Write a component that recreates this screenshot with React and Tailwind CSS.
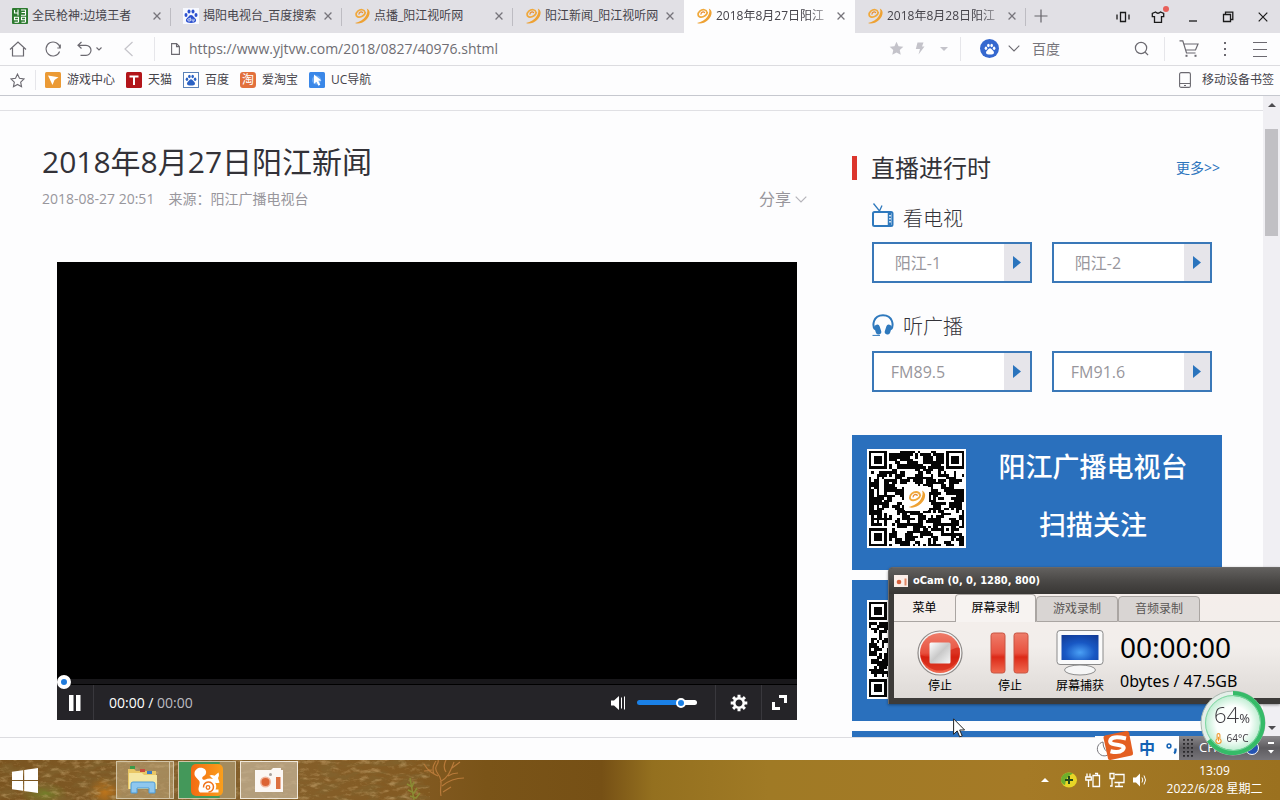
import React from "react";

const QR_SIZE = 37;

function buildQrPath(seed) {
  const finder = (x, y) => {
    const d = Math.max(Math.abs(x - 3), Math.abs(y - 3));
    return d === 3 || d <= 1;
  };
  let state = seed;
  const next = () => {
    state = (state * 1103515245 + 12345) % 2147483648;
    return state / 2147483648;
  };
  const grid = [];
  let path = "";
  for (let y = 0; y < QR_SIZE; y++) {
    grid.push([]);
    for (let x = 0; x < QR_SIZE; x++) {
      const pick = next();
      let on = next() > 0.45;
      if (pick < 0.22 && x > 0) on = grid[y][x - 1];
      else if (pick < 0.44 && y > 0) on = grid[y - 1][x];
      grid[y].push(on);
      if (x < 8 && y < 8) on = x < 7 && y < 7 && finder(x, y);
      else if (x > 28 && y < 8) on = x > 29 && y < 7 && finder(x - 30, y);
      else if (x < 8 && y > 28) on = x < 7 && y > 29 && finder(x, y - 30);
      else if (x >= 28 && x <= 32 && y >= 28 && y <= 32) {
        const d = Math.max(Math.abs(x - 30), Math.abs(y - 30));
        on = d !== 1;
      }
      if (on) path += `M${x} ${y}h1v1h-1z`;
    }
  }
  return path;
}

const QR_ONE = buildQrPath(4711);
const QR_TWO = buildQrPath(9203);

function SwirlShape() {
  return (
    <g>
      <path d="M12.800.4C17 2 16.300 8 12 12 8.500 15.300 4 16.400 1 15 5.500 14 9.800 11.600 11.800 8 13.400 5 13.800 2.500 12.800.4z" fill="#eea234" />
      <path d="M11 4.300C10.400 1.300 6.500.9 3.800 3.200 1.200 5.500 1.600 9 4.800 9.100 7.800 9.200 10.800 7 11.300 4.500" fill="none" stroke="#f0a93c" strokeWidth="1.700" strokeLinecap="round" />
      <path d="M8.600 4.600C7.500 3.200 4.900 4.300 5 6.100" fill="none" stroke="#e88f33" strokeWidth="1.200" strokeLinecap="round" />
    </g>
  );
}

function Swirl({ className = "h-4 w-4" }) {
  return (
    <svg viewBox="0 0 16 16" className={className} aria-hidden="true">
      <SwirlShape />
    </svg>
  );
}

function Qr({ path, className }) {
  return (
    <svg viewBox="-0.7 -0.7 38.400 38.400" className={className} shapeRendering="crispEdges" role="img" aria-label="二维码">
      <rect x="-0.7" y="-0.7" width="38.400" height="38.400" fill="#fff" />
      <path d={path} fill="#050505" />
      <rect x="13.500" y="13.500" width="10" height="10" rx="1.500" fill="#fff" />
      <g transform="translate(15 15.200) scale(.44)" shapeRendering="auto">
        <SwirlShape />
      </g>
    </svg>
  );
}

function Paw({ className, fill }) {
  return (
    <svg viewBox="0 0 16 16" className={className} fill={fill} aria-hidden="true">
      <ellipse cx="2.600" cy="7" rx="1.700" ry="2.200" />
      <ellipse cx="5.900" cy="3.300" rx="1.700" ry="2.300" />
      <ellipse cx="10.200" cy="3.300" rx="1.700" ry="2.300" />
      <ellipse cx="13.500" cy="7" rx="1.700" ry="2.200" />
      <path d="M8 7c1.500 0 2.300 1.400 3.500 2.700 1.500 1.500 2.200 2.500 1.600 4-.6 1.400-2.200 1.600-5.100 1.600s-4.500-.2-5.100-1.600c-.6-1.500.1-2.500 1.600-4C5.700 8.400 6.500 7 8 7z" />
    </svg>
  );
}

function BaiduIcon() {
  return (
    <svg viewBox="0 0 16 16" className="h-4 w-4" aria-hidden="true">
      <rect width="16" height="16" fill="#f7f9ff" />
      <g fill="#2b50cf">
        <ellipse cx="3" cy="7" rx="1.500" ry="2" />
        <ellipse cx="6" cy="3.500" rx="1.500" ry="2.100" />
        <ellipse cx="10" cy="3.500" rx="1.500" ry="2.100" />
        <ellipse cx="13" cy="7" rx="1.500" ry="2" />
        <path d="M8 7c1.500 0 2.200 1.400 3.400 2.600 1.400 1.400 2 2.300 1.500 3.700-.6 1.400-2 1.600-4.900 1.600s-4.300-.2-4.900-1.600c-.5-1.400.1-2.300 1.500-3.700C5.800 8.400 6.500 7 8 7z" />
      </g>
      <path d="M7.300 9.500v3.500h-1.500a1 1 0 010-2.200h1.500M9 10.800v1.500q0 .8 1 .8h1v-2.300" fill="none" stroke="#fff" strokeWidth=".8" />
    </svg>
  );
}

function GameIcon() {
  return (
    <svg viewBox="0 0 16 16" className="h-4 w-4" fill="none" aria-hidden="true">
      <rect width="16" height="16" rx="1" fill="#2c7a2f" />
      <g stroke="#fff" strokeWidth="1.100">
        <path d="M2.500 2v3h4M6 1.500v6M9 2h4.500v5.300H9M9.500 4.500h4" />
        <path d="M6.500 14.300H2.500M6.500 14.300V9.300h-4v2.500h4M13.500 14.300H9.500M13.500 14.300V9.300h-4v2.500h4" />
      </g>
    </svg>
  );
}

function CloseMark({ className = "h-2 w-2", width = 1.6 }) {
  return (
    <svg viewBox="0 0 10 10" className={className} stroke="currentColor" strokeWidth={width} aria-hidden="true">
      <path d="M.7.7l8.600 8.600M9.300.7L.7 9.300" />
    </svg>
  );
}

const TABS = [
  { title: "全民枪神:边境王者", icon: <GameIcon /> },
  { title: "揭阳电视台_百度搜索", icon: <BaiduIcon /> },
  { title: "点播_阳江视听网", icon: <Swirl /> },
  { title: "阳江新闻_阳江视听网", icon: <Swirl /> },
  { title: "2018年8月27日阳江", icon: <Swirl />, active: true },
  { title: "2018年8月28日阳江", icon: <Swirl /> },
];

function TabStrip() {
  return (
    <div className="flex h-[33px] shrink-0 bg-[#e1e0e5]">
      <div role="tablist" className="flex min-w-0">
        {TABS.map((tab, i) => (
          <div
            key={tab.title}
            className={
              "relative flex w-[171px] min-w-0 items-center pb-[2px] pl-3 pr-[10px] " + (tab.active ? "bg-[#fdfdfe]" : "")
            }
          >
            <button role="tab" aria-selected={!!tab.active} className="flex min-w-0 flex-1 items-center gap-1 text-left">
              <span className="shrink-0">{tab.icon}</span>
              <span
                className={
                  "whitespace-nowrap text-xs text-[#45434a] " +
                  (i < 4 ? "" : "[mask-image:linear-gradient(to_right,#000_92px,#0004_112px)]")
                }
              >
                {tab.title}
              </span>
            </button>
            <button aria-label="关闭标签页" className="flex w-2 shrink-0 justify-center text-[#77757c]">
              <CloseMark />
            </button>
            {i !== 3 && i !== 4 && <span className="absolute right-0 top-2 h-[18px] w-px bg-[#bdbcc2]" />}
          </div>
        ))}
      </div>
      <button aria-label="新建标签页" className="flex w-[30px] items-center justify-center pb-[2px] text-[#66646a]">
        <svg viewBox="0 0 14 14" className="h-[14px] w-[14px]" stroke="currentColor" strokeWidth="1.200"><path d="M7 .5v13M.5 7h13" /></svg>
      </button>
      <div className="ml-auto flex text-[#1a1a1a]">
        <button aria-label="分屏" className="flex w-[35px] items-center justify-center">
          <svg viewBox="0 0 14 12" className="h-3 w-[14px]" fill="none" stroke="currentColor" strokeWidth="1.300"><path d="M1 3.500v5M13 3.500v5M4.500 1.500h5v9h-5z" /></svg>
        </button>
        <button aria-label="皮肤" className="relative flex w-[35px] items-center justify-center">
          <svg viewBox="0 0 14 12" className="h-3 w-[14px]" fill="none" stroke="currentColor" strokeWidth="1.300"><path d="M4.500 1L1.300 2.500v3.200H3.500v5.600h7V5.700h2.200V2.500L9.500 1Q7 3.500 4.500 1z" /></svg>
          <span className="absolute right-[6px] top-[6px] h-[6px] w-[6px] rounded-full bg-[#e8605a]" />
        </button>
        <button aria-label="最小化" className="flex w-[35px] items-center justify-center">
          <svg viewBox="0 0 10 10" className="h-[10px] w-[10px]" stroke="currentColor" strokeWidth="1.300"><path d="M1 9h8" /></svg>
        </button>
        <button aria-label="还原" className="flex w-[35px] items-center justify-center">
          <svg viewBox="0 0 12 12" className="h-3 w-3" fill="none" stroke="currentColor" strokeWidth="1.300"><path d="M1.500 3.500h7v7h-7zM3.500 3V1.200h7.300v7.300H9" /></svg>
        </button>
        <button aria-label="关闭" className="flex w-[35px] items-center justify-center">
          <CloseMark className="h-[10px] w-[10px]" width={1.2} />
        </button>
      </div>
    </div>
  );
}

function Toolbar() {
  return (
    <div className="flex h-[33px] shrink-0 items-center border-b border-[#dcdce0] bg-[#fdfdfe] pb-px text-[#6b6970]">
      <button aria-label="主页" className="flex w-9 justify-center">
        <svg viewBox="0 0 18 16" className="h-4 w-[18px]" fill="none" stroke="currentColor" strokeWidth="1.200"><path d="M1 8.500L9 1l8 7.500M3.500 7v8h11V7" /></svg>
      </button>
      <button aria-label="刷新" className="flex w-[34px] justify-center">
        <svg viewBox="0 0 16 16" className="h-4 w-4" fill="none" stroke="currentColor" strokeWidth="1.100"><path d="M15 7A7 7 0 1 0 14.600 10.500M15.300 3.500V7h-3" /></svg>
      </button>
      <button aria-label="撤销" className="flex w-[38px] items-center justify-center gap-1">
        <svg viewBox="0 0 15 16" className="h-4 w-[15px]" fill="none" stroke="currentColor" strokeWidth="1.200"><path d="M4.500 1L1 4.300l3.500 3.200M1.200 4.300H9a5 5 0 010 10H3.500" /></svg>
        <svg viewBox="0 0 6 4" className="h-1 w-[6px]" fill="none" stroke="currentColor" strokeWidth="1.100"><path d="M.5.500L3 3 5.500.500" /></svg>
      </button>
      <button aria-label="后退" className="flex w-10 justify-center text-[#c5c4ca]">
        <svg viewBox="0 0 9 16" className="h-4 w-[9px]" fill="none" stroke="currentColor" strokeWidth="1.200"><path d="M8.500 1L1 8l7.500 7" /></svg>
      </button>
      <span className="ml-[6px] h-6 w-px bg-[#e6e6ea]" />
      <svg viewBox="0 0 9 12" className="ml-4 h-3 w-[9px]" fill="none" stroke="currentColor" strokeWidth="1.100" aria-hidden="true"><path d="M.6.600h5L8.400 3.500v7.900H.6zM5.500.600v3h3" /></svg>
      <input
        aria-label="地址"
        type="text"
        defaultValue="https://www.yjtvw.com/2018/0827/40976.shtml"
        className="ml-[9px] h-6 min-w-0 flex-1 bg-transparent text-sm text-[#6f6d73] outline-none"
      />
      <button aria-label="收藏" className="flex w-6 justify-center text-[#c4c3ca]">
        <svg viewBox="0 0 16 16" className="h-[15px] w-[15px]" fill="currentColor"><path d="M8 .8l2.200 4.700 5.100.6-3.800 3.500 1 5.100L8 12.200l-4.500 2.500 1-5.100L.7 6.100l5.100-.6z" /></svg>
      </button>
      <button aria-label="极速" className="flex w-6 justify-center text-[#c4c3ca]">
        <svg viewBox="0 0 10 13" className="h-[13px] w-[10px]" fill="currentColor"><path d="M2.500.500h6L7 4.500h2.500L3.500 12.500 5 7H.8z" /></svg>
      </button>
      <button aria-label="更多" className="flex w-6 justify-center text-[#c4c3ca]">
        <svg viewBox="0 0 8 4" className="h-1 w-2" fill="currentColor"><path d="M0 0h8L4 4z" /></svg>
      </button>
      <span className="ml-1 h-6 w-px bg-[#e6e6ea]" />
      <span className="ml-[19px] flex h-[19px] w-[19px] items-center justify-center rounded-full bg-[#3568cf]">
        <Paw className="h-3 w-3" fill="#fff" />
      </span>
      <button aria-label="选择搜索引擎" className="flex w-[30px] justify-center">
        <svg viewBox="0 0 12 7" className="h-[7px] w-3" fill="none" stroke="currentColor" strokeWidth="1.100"><path d="M.700.700L6 6 11.300.700" /></svg>
      </button>
      <input aria-label="搜索" type="text" placeholder="百度" className="ml-[3px] h-6 w-[97px] bg-transparent text-sm outline-none placeholder:text-[#77757b]" />
      <button aria-label="开始搜索" className="flex w-6 justify-center">
        <svg viewBox="0 0 16 16" className="h-[15px] w-[15px]" fill="none" stroke="currentColor" strokeWidth="1.300"><circle cx="7.500" cy="7.500" r="6" /><path d="M12 12l3 3" /></svg>
      </button>
      <span className="ml-[11px] h-6 w-px bg-[#e6e6ea]" />
      <button aria-label="购物" className="ml-3 flex w-6 justify-center">
        <svg viewBox="0 0 20 17" className="h-[17px] w-5" fill="none" stroke="currentColor" strokeWidth="1.200"><path d="M.500.800h3.300L7.500 13h9M4.800 4H19l-2.500 6H6.700" /><g fill="currentColor" stroke="none"><rect x="6.500" y="14.800" width="2" height="2" /><rect x="15.500" y="14.800" width="2" height="2" /></g></svg>
      </button>
      <button aria-label="扩展" className="ml-3 flex w-6 justify-center">
        <svg viewBox="0 0 2 14" className="h-[14px] w-[2px]" fill="currentColor"><path d="M0 0h2v2H0zM0 6h2v2H0zM0 12h2v2H0z" /></svg>
      </button>
      <button aria-label="菜单" className="ml-[11px] mr-2 flex w-6 justify-center">
        <svg viewBox="0 0 14 16" className="h-4 w-[14px]" fill="currentColor" shapeRendering="crispEdges"><path d="M0 1h14v1H0zM0 8h14v1H0zM0 15h14v1H0z" /></svg>
      </button>
    </div>
  );
}

const BOOKMARKS = [
  {
    label: "游戏中心",
    icon: <svg viewBox="0 0 16 16" className="h-4 w-4"><rect width="16" height="16" rx="1.500" fill="#eb9a35" /><path d="M3 3.500l10.500 1.800L9.500 8l-2 5z" fill="#fff" /></svg>,
  },
  {
    label: "天猫",
    icon: <svg viewBox="0 0 16 16" className="h-4 w-4"><rect width="16" height="16" rx="1.500" fill="#b3151a" /><path d="M3.500 4.500h9M8 4.500v8.500" stroke="#fff" strokeWidth="2" /></svg>,
  },
  {
    label: "百度",
    icon: <span className="block h-4 w-4 border border-[#5b82b8] bg-white p-px"><Paw className="h-3 w-3" fill="#2b62c4" /></span>,
  },
  {
    label: "爱淘宝",
    icon: <span className="flex h-4 w-4 items-center justify-center rounded-[3px] bg-[#e2703c] text-[12px] leading-4 text-white">淘</span>,
  },
  {
    label: "UC导航",
    icon: <svg viewBox="0 0 16 16" className="h-4 w-4"><rect width="16" height="16" rx="1.500" fill="#3a87e8" /><circle cx="7.500" cy="8" r="4.500" fill="#69a8f4" /><path d="M5 2.500l7.500 6-3.200.3 2 4-1.900.9-1.900-4L5 11.800z" fill="#fff" /></svg>,
  },
];

function BookmarkBar() {
  return (
    <div className="flex h-[30px] shrink-0 items-center border-b border-[#c6c8cf] bg-[#fdfdfe] pb-px text-xs leading-4 text-[#45434a]">
      <button aria-label="添加书签" className="flex w-[35px] justify-center text-[#6b6970]">
        <svg viewBox="0 0 16 16" className="h-[15px] w-[15px]" fill="none" stroke="currentColor" strokeWidth="1.200"><path d="M8 1.200l2.100 4.500 4.900.6-3.600 3.400.9 4.900L8 12.200l-4.300 2.400.9-4.900L1 6.300l4.900-.6z" /></svg>
      </button>
      <span className="h-5 w-px bg-[#e6e6ea]" />
      <nav className="ml-[9px] flex gap-[11px]">
        {BOOKMARKS.map((b) => (
          <a key={b.label} href="#" className="flex items-center gap-[6px]">
            {b.icon}
            {b.label}
          </a>
        ))}
      </nav>
      <a href="#" className="ml-auto mr-[6px] flex items-center gap-[11px]">
        <svg viewBox="0 0 12 16" className="h-4 w-3" fill="none" stroke="#6b6970" strokeWidth="1.100"><rect x=".6" y=".6" width="10.800" height="14.800" rx="1.500" /><path d="M.6 11.500h10.800M5 13.500h2" /></svg>
        移动设备书签
      </a>
    </div>
  );
}

function Player() {
  return (
    <section aria-label="视频播放器" className="ml-[15px] mr-[10px] mt-[51px] bg-[#252428]">
      <div className="h-[417px] bg-black" />
      <div className="flex h-[6px] items-center border-b border-black bg-[#18171a]">
        <input
          type="range"
          aria-label="播放进度"
          defaultValue="0"
          className="h-[14px] w-full shrink-0 appearance-none bg-transparent [&::-webkit-slider-thumb]:h-[14px] [&::-webkit-slider-thumb]:w-[14px] [&::-webkit-slider-thumb]:appearance-none [&::-webkit-slider-thumb]:rounded-full [&::-webkit-slider-thumb]:border-4 [&::-webkit-slider-thumb]:border-white [&::-webkit-slider-thumb]:bg-[#1f7bdc]"
        />
      </div>
      <div className="flex h-[35px] items-center text-white">
        <button aria-label="暂停" className="flex h-full w-[37px] items-center justify-center border-r border-[#39383d]">
          <svg viewBox="0 0 12 16" className="h-4 w-3" fill="#fff"><path d="M0 0h4.500v16H0zM7 0h4.500v16H7z" /></svg>
        </button>
        <div className="ml-[15px] text-sm">
          00:00 / <span className="text-[#bcbbc0]">00:00</span>
        </div>
        <button aria-label="静音" className="ml-auto">
          <svg viewBox="0 0 15 14" className="h-[14px] w-[15px]" fill="#fff"><path d="M0 4.500h3L8 0v14L3 9.500H0z" /><path d="M10.500 1.500v11M13.500 .5v13" stroke="#fff" strokeWidth="1" /></svg>
        </button>
        <input
          type="range"
          aria-label="音量"
          defaultValue="78"
          className="ml-[11px] h-[5px] w-[60px] appearance-none rounded-full bg-[linear-gradient(to_right,#1a80e6_73%,#fff_73%)] [&::-webkit-slider-thumb]:h-[10px] [&::-webkit-slider-thumb]:w-[10px] [&::-webkit-slider-thumb]:appearance-none [&::-webkit-slider-thumb]:rounded-full [&::-webkit-slider-thumb]:border-2 [&::-webkit-slider-thumb]:border-white [&::-webkit-slider-thumb]:bg-[#1a80e6]"
        />
        <button aria-label="设置" className="ml-[18px] flex h-full w-[46px] items-center justify-center border-l border-[#39383d]">
          <svg viewBox="-9 -9 18 18" className="h-[18px] w-[18px]" fill="none" stroke="#fff">
            <circle r="4.800" strokeWidth="2.600" />
            <g strokeWidth="3">
              <path d="M0-8.300v3M0 5.300v3M-8.300 0h3M5.300 0h3M-5.900-5.900l2.100 2.100M3.800 3.800l2.100 2.100M-5.900 5.900l2.100-2.100M3.800-3.800l2.100-2.100" />
            </g>
          </svg>
        </button>
        <button aria-label="全屏" className="flex h-full w-9 items-center justify-center border-l border-[#39383d]">
          <svg viewBox="0 0 15 15" className="h-[15px] w-[15px]" fill="none" stroke="#fff" strokeWidth="3"><path d="M7 1.500h6.500V8M8 13.500H1.500V7" /></svg>
        </button>
      </div>
    </section>
  );
}

function Channel({ label }) {
  return (
    <button className="flex h-[41px] w-40 border-2 border-[#3a78b8] bg-white text-base text-[#98969c]">
      <span className="flex-1 self-center pr-[42px] text-center">{label}</span>
      <span className="flex w-[26px] items-center justify-center self-stretch bg-[#e6e5ea]">
        <svg viewBox="0 0 8 13" className="h-[13px] w-2" fill="#2b74bd"><path d="M0 0l8 6.500L0 13z" /></svg>
      </span>
    </button>
  );
}

function Sidebar() {
  return (
    <aside className="w-[370px] shrink-0 pt-[41px] text-[#333238]">
      <div className="flex h-8 items-center">
        <span className="h-6 w-[5px] bg-[#dc352d]" />
        <h2 className="ml-[14px] text-2xl">直播进行时</h2>
        <a href="#" className="ml-auto mr-[2px] text-sm text-[#2b74bd]">更多&gt;&gt;</a>
      </div>
      <div className="flex h-[58px] items-center gap-[9px] pl-5 pt-3">
        <svg viewBox="0 0 22 24" className="-mt-2 h-6 w-[22px]" fill="none" stroke="#2f79bd" aria-hidden="true">
          <path d="M1.500.5l6 7.500L10 2.500" strokeWidth="1.300" />
          <rect x="1" y="9" width="19.500" height="14" rx="1.500" strokeWidth="2" />
          <path d="M17.500 9v14" strokeWidth="3.500" />
          <path d="M18 12v1.500M18 15v1.500M18 18v1.500" stroke="#fff" strokeWidth="1.500" />
        </svg>
        <h3 className="text-xl font-light">看电视</h3>
      </div>
      <div className="flex gap-5 pl-5">
        <Channel label="阳江-1" />
        <Channel label="阳江-2" />
      </div>
      <div className="flex h-[68px] items-center gap-[9px] pl-5 pt-5">
        <svg viewBox="0 0 22 22" className="-mt-1 h-[22px] w-[22px]" aria-hidden="true">
          <path d="M3 15.500C.2 12 .7 1.200 11 1.200S21.800 12 19 15.500" fill="none" stroke="#2f79bd" strokeWidth="2" />
          <rect x="3" y="10.500" width="5.500" height="10" rx="2.500" transform="rotate(-18 6 15.500)" fill="#2f79bd" />
          <rect x="13.500" y="10.500" width="5.500" height="10" rx="2.500" transform="rotate(18 16 15.500)" fill="#2f79bd" />
          <path d="M.5 21.400h7.500" stroke="#2f79bd" strokeWidth="1" />
        </svg>
        <h3 className="text-xl font-light">听广播</h3>
      </div>
      <div className="flex gap-5 pl-5">
        <Channel label="FM89.5" />
        <Channel label="FM91.6" />
      </div>
      <div className="mt-[43px] flex h-[135px] bg-[#2a70bd] pl-[15px] pt-[14px] text-white">
        <Qr path={QR_ONE} className="h-[99px] w-[99px] shrink-0" />
        <div className="flex flex-1 flex-col items-center gap-[18px] pr-[2px] text-[27px] font-medium leading-10">
          <p className="-mt-[2px]">阳江广播电视台</p>
          <p>扫描关注</p>
        </div>
      </div>
      <div className="mt-[10px] h-[141px] bg-[#2a70bd] pl-[15px] pt-5">
        <Qr path={QR_TWO} className="h-[99px] w-[99px]" />
      </div>
      <div className="mt-[10px] h-[135px] bg-[#2a70bd]" />
    </aside>
  );
}

function Scrollbar() {
  return (
    <div className="flex w-[17px] shrink-0 flex-col items-center bg-[#f0eff3]" aria-hidden="true">
      <svg viewBox="0 0 8 4" className="mt-[7px] h-1 w-2" fill="#4d4c50"><path d="M0 4h8L4 0z" /></svg>
      <div className="mt-[22px] h-[107px] w-[13px] bg-[#c1c0c4]" />
      <svg viewBox="0 0 8 4" className="mb-[7px] mt-auto h-1 w-2" fill="#4d4c50"><path d="M0 0h8L4 4z" /></svg>
    </div>
  );
}

function OcamWindow() {
  return (
    <section aria-label="oCam" className="fixed bottom-24 right-0 w-[392px] rounded-tl-[5px] border-l border-t border-[#6a6866] bg-[#3d3b39] pb-[6px] pl-[5px] font-['DejaVu_Sans_Condensed','Noto_Sans_CJK_SC',sans-serif] text-black shadow-[0_1px_3px_#0006]">
      <div className="-ml-[5px] flex h-[26px] items-center rounded-tl bg-[linear-gradient(#62605e,#4a4846_50%,#383634)] pl-[5px] text-[11px] font-bold text-white">
        <svg viewBox="0 0 14 12" className="mr-[5px] h-3 w-[14px]" aria-hidden="true"><rect width="14" height="12" fill="#fbeee8" /><circle cx="5" cy="7" r="2.300" fill="#d6603c" /><path d="M10.500 3.500h2v7h-2z" fill="#e08868" /></svg>
        oCam (0, 0, 1280, 800)
      </div>
      <div className="bg-[linear-gradient(#f5eeeb,#f2eeeb_50%,#dedad7)]">
        <div role="tablist" className="flex h-7 items-stretch text-xs">
          <button role="tab" className="w-[61px] border-b border-[#aaa5a2]">菜单</button>
          <button role="tab" aria-selected="true" className="w-[81px] rounded-t border-x border-t border-[#aaa5a2] bg-[#f7f3f1] pb-[2px]">屏幕录制</button>
          <button role="tab" className="mt-[2px] w-[82px] rounded-t border border-[#aaa5a2] bg-[#d9d5d3] text-[#5a5755]">游戏录制</button>
          <button role="tab" className="mt-[2px] w-[82px] rounded-t border border-[#aaa5a2] bg-[#d9d5d3] text-[#5a5755]">音频录制</button>
          <span className="flex-1 border-b border-[#aaa5a2]" />
        </div>
        <div className="flex h-[76px] text-xs leading-4">
          <button className="ml-[18px] flex w-14 flex-col items-center gap-[2px] pt-2">
            <svg viewBox="0 0 46 46" className="h-[46px] w-[46px] shrink-0">
              <defs>
                <linearGradient id="red" x2="0" y2="1"><stop stopColor="#ee7d6a" /><stop offset=".5" stopColor="#e8503e" /><stop offset=".6" stopColor="#dc2a18" /><stop offset="1" stopColor="#f06a50" /></linearGradient>
                <linearGradient id="silver" x2="1" y2="1"><stop stopColor="#fff" /><stop offset=".5" stopColor="#c9c9c9" /><stop offset="1" stopColor="#f6f6f6" /></linearGradient>
              </defs>
              <circle cx="23" cy="23" r="22" fill="#f5f3f2" stroke="#8e8a88" strokeWidth="1.200" />
              <circle cx="23" cy="23" r="20" fill="url(#red)" />
              <path d="M3.500 25Q16 30 30 22T43 20A20 20 0 013.500 25z" fill="#cf1a0a" opacity=".55" />
              <rect x="12.500" y="12.500" width="21" height="21" rx="1.500" fill="url(#silver)" />
            </svg>
            <span>停止</span>
          </button>
          <button className="ml-[14px] flex w-14 flex-col items-center gap-[2px] pt-2">
            <svg viewBox="0 0 40 46" className="h-[46px] w-10 shrink-0">
              <g fill="url(#red)" stroke="#c85543">
                <rect x="1" y="3" width="14" height="40" rx="2.500" />
                <rect x="24" y="3" width="14" height="40" rx="2.500" />
              </g>
            </svg>
            <span>停止</span>
          </button>
          <button className="ml-[14px] flex w-14 flex-col items-center gap-[2px] pt-2">
            <svg viewBox="0 0 48 46" className="h-[46px] w-12 shrink-0">
              <defs>
                <radialGradient id="screen" cx=".5" cy=".7" r=".8"><stop stopColor="#4aa0f5" /><stop offset=".5" stopColor="#1858c4" /><stop offset="1" stopColor="#123c98" /></radialGradient>
              </defs>
              <path d="M18 33h12l3 6H15z" fill="#d6d6d6" />
              <ellipse cx="24" cy="40" rx="15.500" ry="5" fill="#f6f6f6" stroke="#8e8e8e" />
              <rect x="1" y="0.500" width="46" height="34" rx="3" fill="#fafafa" stroke="#8a8a8a" />
              <rect x="5.500" y="5" width="37" height="25" fill="url(#screen)" />
            </svg>
            <span>屏幕捕获</span>
          </button>
          <div className="ml-3 pt-[7px] font-['Noto_Sans','DejaVu_Sans',sans-serif]">
            <p className="text-[28px] leading-9">00:00:00</p>
            <p className="mt-1 text-base leading-6">0bytes / 47.5GB</p>
          </div>
        </div>
      </div>
    </section>
  );
}

function InputBar() {
  return (
    <div className="fixed bottom-10 right-0 flex h-6 items-stretch">
      <div className="flex items-center bg-[#fdfdfe] text-[#1462b4]">
        <svg viewBox="0 0 44 32" className="-mt-[6px] h-8 w-11" aria-hidden="true">
          <path d="M8 13a7 7 0 1 0 7 11Q8 22 8 13z" fill="#fff" stroke="#77757b" />
          <path d="M10 6.500L31.500 2q2-.3 2.500 1.500L38 24q.3 2-1.500 2.500L15.500 31q-2 .3-2.500-1.500L8.500 9q-.3-2 1.500-2.500z" fill="#e45f22" />
          <path d="M31 9.500q-13-3-15.500 1.300c-2 4 3.500 4.700 8 5.200 5 .6 6.500 2.500 4 5-2.500 2.300-8 2.300-12 1.300" fill="none" stroke="#fff" strokeWidth="4" />
        </svg>
        <span className="w-[26px] text-base font-bold leading-6">中</span>
        <svg viewBox="0 0 14 14" className="h-[14px] w-[14px]" fill="none" stroke="#1462b4" aria-hidden="true"><circle cx="4" cy="5" r="1.900" strokeWidth="1.500" /><path d="M10.500 7.500v2q0 2-1.500 2.800" strokeWidth="2.300" /></svg>
      </div>
      <div className="flex w-[101px] items-center bg-[linear-gradient(#8a888b,#5e5c60_50%,#77757a)] text-[13px] text-white">
        <svg viewBox="0 0 10 18" className="ml-1 h-[18px] w-[10px]" aria-hidden="true"><path d="M1 0v18M5 0v18M9 0v18" stroke="#252427" strokeWidth="1.800" strokeDasharray="1.800 2.200" /></svg>
        <span className="ml-[6px]">CH</span>
        <span className="ml-7 h-[14px] w-[14px] rounded-full border border-white bg-[#2453b2]" />
        <svg viewBox="0 0 6 12" className="ml-auto mr-[6px] h-3 w-[6px]" fill="#fff" aria-hidden="true"><path d="M0 0h6v2H0zM0 8h6L3 11.500z" /></svg>
      </div>
    </div>
  );
}

function MemoryBall() {
  return (
    <div className="fixed bottom-[44px] right-[14px] h-[66px] w-[66px]">
      <svg viewBox="0 0 66 66" className="absolute inset-0 h-full w-full" aria-hidden="true">
        <defs>
          <radialGradient id="ball"><stop offset=".6" stopColor="#fcfffd" /><stop offset="1" stopColor="#bcecd0" /></radialGradient>
        </defs>
        <circle cx="33" cy="33" r="32" fill="#e4efe9" stroke="#a9b8b0" />
        <circle cx="33" cy="33" r="28" fill="url(#ball)" />
        <path d="M33 3.500a29.500 29.500 0 1 1-24 46.500" fill="none" stroke="#35bb68" strokeWidth="5" />
        <circle cx="33" cy="33" r="27.500" fill="none" stroke="#7fd6a2" />
      </svg>
      <div className="relative flex flex-col items-center pr-[2px] pt-3 text-[#3d3b40]">
        <p className="text-[22px] font-light leading-6">64<span className="text-[13px] font-normal">%</span></p>
        <p className="flex items-center gap-1 text-[10px] leading-4">
          <svg viewBox="0 0 7 12" className="h-[11px] w-[7px]" fill="#fff" stroke="#ef9a2e" strokeWidth="1.200"><path d="M2 6.500V2q0-1.300 1.500-1.300T5 2v4.500q1.400 1 1.400 2.300A2.800 2.500 0 01.6 8.800Q.6 7.500 2 6.500zM3.500 4v5" /></svg>
          64°C
        </p>
      </div>
    </div>
  );
}

function Taskbar() {
  return (
    <footer className="relative flex h-10 shrink-0 items-center bg-[linear-gradient(to_right,#7a5420_0,#85602c_20%,#835a22_32%,#7a5418_38%,#765015_47%,#94701f_51%,#a07a25_60%,#a57a26_80%,#9b711f_100%)] text-white">
      <svg className="absolute inset-0 h-full w-full" aria-hidden="true">
        <defs>
          <filter id="grass" x="0" y="0" width="100%" height="100%">
            <feTurbulence type="fractalNoise" baseFrequency=".05 .14" numOctaves="5" seed="6" />
            <feColorMatrix values="0 0 0 0 .22  0 0 0 0 .13  0 0 0 0 .03  0 4 0 0 -1.700" />
          </filter>
          <filter id="straw" x="0" y="0" width="100%" height="100%">
            <feTurbulence type="fractalNoise" baseFrequency=".1 .22" numOctaves="4" seed="21" />
            <feColorMatrix values="0 0 0 0 .75  0 0 0 0 .52  0 0 0 0 .25  3 0 0 0 -1.500" />
          </filter>
          <radialGradient id="leaf"><stop stopColor="#74802b" /><stop offset="1" stopColor="#74802b" stopOpacity="0" /></radialGradient>
          <radialGradient id="amber"><stop stopColor="#bd751c" /><stop offset="1" stopColor="#bd751c" stopOpacity="0" /></radialGradient>
        </defs>
        <ellipse cx="44" cy="34" rx="24" ry="12" fill="url(#leaf)" />
        <ellipse cx="105" cy="32" rx="18" ry="16" fill="url(#amber)" />
        <rect width="430" height="40" filter="url(#grass)" opacity=".6" />
        <rect width="430" height="40" filter="url(#straw)" opacity=".4" />
        <g fill="none" stroke="#b87a3a" strokeWidth="1.200">
          <path d="M441 36c-2-10 3-14-3-22s2-10 0-14M440 22c8-4 10-10 14-20M438 16c-6-3-10-5-14-12M442 26c6-5 14-8 22-8M446 12c-3-4-2-8 0-12M452 8l8-6M434 14c-2-5-1-9 2-13M448 16c3-2 6-3 10-3M432 10l-8 1M443 32l8-5" />
        </g>
        <path d="M410 18l4 22M407 24l5 3 2-5M408 30l6 3 3-5M410 36l6 2 4-5" fill="none" stroke="#8c8c34" strokeWidth="1.500" />
      </svg>
      <button aria-label="开始" className="relative ml-3">
        <svg viewBox="0 0 26 25" className="h-[25px] w-[26px]" fill="#fff"><path d="M0 3.700L11 2.200v9.700H0zM12.200 2L26 0v11.900H12.200zM0 13h11v9.800L0 21.300zM12.200 13H26v12l-13.800-2z" /></svg>
      </button>
      <div className="relative ml-[78px] flex gap-1">
        <button aria-label="文件资源管理器" className="flex h-[38px] w-[58px] items-center border border-[#d2c4a6] bg-[#c8b48a80]">
          <span className="flex h-full flex-1 items-center justify-center border-r border-[#d2c4a6]">
            <svg viewBox="0 0 32 28" className="h-7 w-8">
              <path d="M1 3h6l2 2h20v18H1z" fill="#e9c765" />
              <path d="M3 0h5v3H3z" fill="#3b9a48" /><path d="M13 3h5v3h-5z" fill="#c9493d" /><path d="M20 5h5v3h-5z" fill="#3c7bc4" />
              <path d="M2 7h13l2 2h13v14H2z" fill="#f5e7a3" />
              <path d="M4 27V18q0-2 2-2h20q2 0 2 2v9h-6v-5H10v5z" fill="#8ec7ef" stroke="#4d9bd6" />
            </svg>
          </span>
          <span className="w-[3px]" />
        </button>
        <button aria-label="UC浏览器" className="flex h-[38px] w-[58px] items-center justify-center border border-[#d2c4a6] bg-[linear-gradient(to_right,#44985a_72%,#a38b5f_73%)]">
          <svg viewBox="0 0 32 32" className="h-8 w-8">
            <defs><linearGradient id="uc" x2="1"><stop stopColor="#f36b12" /><stop offset="1" stopColor="#fa9f1c" /></linearGradient></defs>
            <rect width="32" height="32" rx="5" fill="url(#uc)" />
            <path d="M9 28.500C5.500 25 9.500 21 8.500 17.500 7.500 15 3 13 3.500 9 4 5 8 3 11.500 4c3.500 1 4.500 4 3 6.500-1 1.500-3.300 1.700-3.300 3.500 0 1.500 1.300 2.200 2.600 1.700C16.500 14.500 19.500 14 22 15l-3.500-3.500c2-1 3.500-.5 5 .3l4-3.300c.8 2.500.5 4-.5 5.500l1.500 4.500c-1.500 1-3 .5-4.500.3 1.500 2 1.700 4.500.5 6.700h3v3z" fill="#fff" />
            <path d="M12.500 23.500a5 5 0 115 4.500" fill="none" stroke="#f1731a" strokeWidth="1.500" /><circle cx="17" cy="23.500" r="1.800" fill="none" stroke="#f1731a" strokeWidth="1.300" />
          </svg>
        </button>
        <button aria-label="oCam" className="flex h-[38px] w-[58px] items-center justify-center border border-[#f0e8da] bg-[#c9b9a0b0]">
          <svg viewBox="0 0 28 24" className="h-6 w-7">
            <path d="M0 2h16l2-2h8v2h2v22H0z" fill="#fbf7f4" /><circle cx="10.500" cy="14" r="4.800" fill="#dc6334" stroke="#f0b79f" strokeWidth="1.500" /><circle cx="15.500" cy="6.500" r="1.500" fill="#a79f9a" /><path d="M21 9h4.500v12H21z" fill="#dc7040" />
          </svg>
        </button>
      </div>
      <div className="relative ml-auto flex items-center">
        <button aria-label="显示隐藏的图标" className="mr-3">
          <svg viewBox="0 0 8 4" className="h-1 w-2" fill="#fff"><path d="M0 4h8L4 0z" /></svg>
        </button>
        <svg viewBox="0 0 16 16" className="mr-2 h-4 w-4" aria-hidden="true"><ellipse cx="8" cy="8" rx="8" ry="7.500" fill="#e8d626" /><path d="M0 8a8 7.500 0 0112-6.500Q5 4 4 13 0 11.500 0 8z" fill="#6eae2c" /><path d="M8 4v8M4 8h8" stroke="#23491c" strokeWidth="2" /></svg>
        <svg viewBox="0 0 16 16" className="mr-2 h-4 w-4" fill="none" stroke="#fff" strokeWidth="1.300" aria-hidden="true"><path d="M8 3.500h6.500v11H8zM10 1.500h2.500v2M2 1.500v3M5 1.500v3M.8 5h5.500v3H.8zM3.500 8v7" /></svg>
        <svg viewBox="0 0 16 16" className="mr-2 h-4 w-4" fill="none" stroke="#fff" strokeWidth="1.300" aria-hidden="true"><path d="M6 2.500h9v8H5.500M10 10.500v4M6 14.500h8M1 1.500h4v5H1zM3 6.500v7.500H1" /></svg>
        <svg viewBox="0 0 14 14" className="mr-[18px] h-[14px] w-[14px]" aria-hidden="true"><path d="M0 4.500h3L7 .5v13l-4-4H0z" fill="#fff" /><path d="M9 4.500q1.500 2.500 0 5M11 2.500q3 4.500 0 9" fill="none" stroke="#fff" /></svg>
        <div className="mr-4 w-[99px] text-center text-xs leading-[18px]">
          <p>13:09</p>
          <p>2022/6/28 星期二</p>
        </div>
      </div>
    </footer>
  );
}

export default function App() {
  return (
    <div className="flex h-screen flex-col overflow-hidden bg-[#fdfdfe] font-['Open_Sans','Noto_Sans_CJK_SC',sans-serif]">
      <TabStrip />
      <Toolbar />
      <BookmarkBar />
      <main className="flex min-h-0 flex-1 overflow-hidden">
        <div className="min-w-0 flex-1 overflow-hidden">
          <div className="h-[15px] border-b border-[#e0e0e4]" />
          <div className="flex gap-[45px] pl-[42px] pr-[41px]">
            <article className="min-w-0 flex-1 pt-[31px]">
              <h1 className="text-3xl font-normal leading-10 text-[#333238]">2018年8月27日阳江新闻</h1>
              <div className="mt-[5px] flex items-center text-sm leading-6 text-[#98969c]">
                <span>2018-08-27 20:51</span>
                <span className="ml-[14px]">来源：阳江广播电视台</span>
                <button className="ml-auto flex items-center gap-1 text-base leading-6">
                  分享
                  <svg viewBox="0 0 12 7" className="h-[7px] w-3" fill="none" stroke="#b5b4ba" strokeWidth="1.200"><path d="M.7.7L6 6 11.300.7" /></svg>
                </button>
              </div>
              <Player />
            </article>
            <Sidebar />
          </div>
        </div>
        <Scrollbar />
      </main>
      <div className="h-[23px] shrink-0 border-t border-[#dcdce0]" />
      <Taskbar />
      <OcamWindow />
      <InputBar />
      <MemoryBall />
      <svg viewBox="0 0 12 20" className="pointer-events-none fixed bottom-[62px] left-[953px] h-5 w-3" aria-hidden="true">
        <path d="M.6.800v15.500l3.600-3.400 2.500 5.900 2.500-1-2.500-5.800h4.900z" fill="#fff" stroke="#222" strokeWidth="1" />
      </svg>
    </div>
  );
}
